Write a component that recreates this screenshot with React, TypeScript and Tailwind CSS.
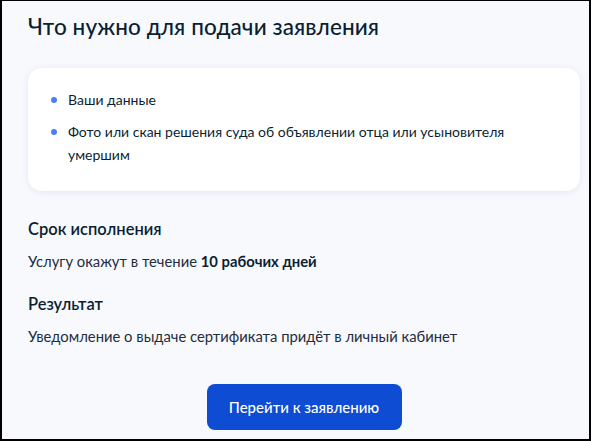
import React from "react";

export default function App() {
  return (
    <div className="w-[591px] h-[441px] bg-black p-[2px] pt-[1px]" style={{ fontFamily: "Lato, 'Noto Sans', sans-serif" }}>
      <div className="w-full h-full bg-[#f8f9fd] flex flex-col pl-[26px] pr-[9px] text-[#0b1f33] overflow-hidden">
        <h1 className="text-[22.5px] leading-[28px] mt-[12px] font-medium tracking-[0.1px]">Что нужно для подачи заявления</h1>
        <div className="mt-[27px] bg-white rounded-[14px] shadow-[0_1px_6px_rgba(160,175,210,0.25)] pl-[23px] pr-4 pt-[20px] pb-[25px] flex flex-col gap-[9px]">
          <div className="flex items-start gap-[11px] text-[14px] leading-[23px]">
            <span className="mt-[8.5px] w-[6px] h-[6px] rounded-full bg-[#4c7ef5] shrink-0"></span>
            <span>Ваши данные</span>
          </div>
          <div className="flex items-start gap-[11px] text-[14px] leading-[23px]">
            <span className="mt-[8.5px] w-[6px] h-[6px] rounded-full bg-[#4c7ef5] shrink-0"></span>
            <span>Фото или скан решения суда об объявлении отца или усыновителя<br />умершим</span>
          </div>
        </div>
        <h2 className="mt-[27px] text-[16.5px] leading-[22px] font-semibold">Срок исполнения</h2>
        <p className="mt-[10px] text-[14.8px] leading-[22px] text-[#1f2d3c]">Услугу окажут в течение <b className="font-bold text-[#0b1f33]">10 рабочих дней</b></p>
        <h2 className="mt-[21px] text-[16.5px] leading-[22px] font-semibold">Результат</h2>
        <p className="mt-[10px] text-[14.8px] leading-[22px] text-[#1f2d3c]">Уведомление о выдаче сертификата придёт в личный кабинет</p>
        <div className="flex justify-center mt-[37px]">
          <button className="w-[195px] h-[46px] rounded-[8px] bg-[#0d4cd3] text-white text-[15px] font-medium">Перейти к заявлению</button>
        </div>
      </div>
    </div>
  );
}
